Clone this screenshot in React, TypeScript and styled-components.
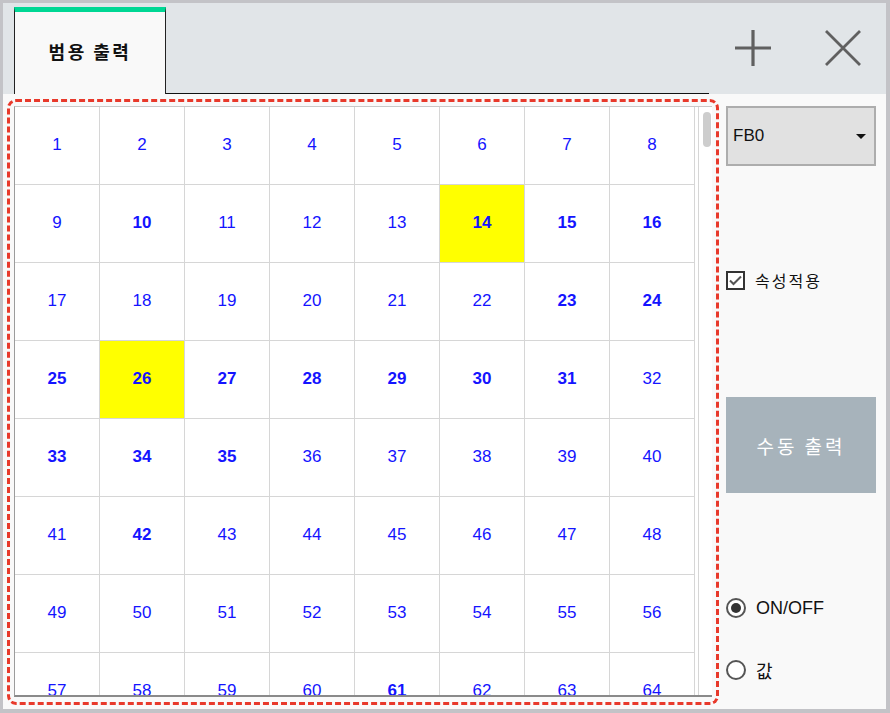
import React from 'react';
import styled, { createGlobalStyle } from 'styled-components';

const GlobalStyle = createGlobalStyle`
  html, body {
    margin: 0;
    padding: 0;
    background: #ffffff;
  }
  body {
    font-family: "Liberation Sans", "Noto Sans CJK KR", sans-serif;
  }
  * {
    box-sizing: border-box;
  }
`;

const KR = `"Noto Sans CJK KR", "Liberation Sans", sans-serif`;

//<editor-fold desc="Styles">
const Frame = styled.div`
  width: 890px;
  height: 713px;
  display: flex;
  flex-direction: column;
  border: 3px solid #c3c3c7;
  border-right-width: 4px;
  border-bottom-width: 4px;
  background: #f9f9f9;
`;

const Header = styled.div`
  height: 91px;
  flex: none;
  display: flex;
  align-items: flex-end;
  padding-left: 11px;
  background: #e1e5e8;
`;

const Tab = styled.div`
  width: 152px;
  height: 87px;
  display: flex;
  align-items: center;
  justify-content: center;
  padding-bottom: 5px;
  background: #f9f9f9;
  border-top: 5px solid #00d794;
  border-left: 1px solid #222;
  border-right: 1px solid #222;
  font-family: ${KR};
  font-weight: 700;
  font-size: 18px;
  letter-spacing: 2.5px;
  color: #111;
`;

const TabRule = styled.div`
  width: 543px;
  align-self: stretch;
  border-bottom: 1px solid #111;
`;

const Actions = styled.div`
  flex: 1;
  align-self: stretch;
  display: flex;
  align-items: center;
  gap: 54px;
  padding-left: 26px;
  padding-bottom: 2px;
`;

const IconButton = styled.button`
  width: 36px;
  height: 36px;
  padding: 0;
  border: none;
  background: transparent;
  display: flex;
  align-items: center;
  justify-content: center;
  cursor: pointer;
`;

const Body = styled.div`
  flex: 1;
  display: flex;
  min-height: 0;
`;

const FocusRing = styled.div`
  width: 712px;
  height: 606px;
  margin: 5px 0 0 4px;
  padding: 4px 4px 5px 4px;
  border: 3px dashed #e8392b;
  border-radius: 9px;
  display: flex;
`;

const ListBox = styled.div`
  flex: 1;
  display: flex;
  min-width: 0;
  background: #ffffff;
  border-left: 1px solid #9c9c9c;
  border-top: 1px solid #c8c8c8;
  border-bottom: 2px solid #8a8a8a;
`;

const Viewport = styled.div`
  flex: 1;
  overflow: hidden;
`;

const Rail = styled.div`
  width: 14px;
  flex: none;
  padding: 5px 1px 0 4px;
  border-left: 1px solid #d6d6d6;
  background: #ffffff;
`;

const Thumb = styled.div`
  height: 35px;
  border-radius: 5px;
  background: #cdcdcd;
`;

const Grid = styled.div`
  display: grid;
  grid-template-columns: repeat(8, 85px);
`;

const Cell = styled.div<{ $on?: boolean; $bold?: boolean }>`
  height: 78px;
  display: flex;
  align-items: center;
  justify-content: center;
  border-right: 1px solid #d6d6d6;
  border-bottom: 1px solid #d6d6d6;
  background: ${p => (p.$on ? '#ffff00' : '#ffffff')};
  color: #1414ff;
  font-size: 17px;
  font-weight: ${p => (p.$bold ? 700 : 400)};
  padding-bottom: 1px;
`;

const Side = styled.div`
  flex: 1;
  display: flex;
  flex-direction: column;
  padding: 0 10px 0 7px;
`;

const Select = styled.div`
  margin-top: 12px;
  height: 60px;
  display: flex;
  align-items: center;
  justify-content: space-between;
  padding: 0 8px 0 5px;
  background: #e1e1e1;
  border: 2px solid #adadad;
  font-size: 17px;
  color: #111;
`;

const Caret = styled.span`
  width: 0;
  height: 0;
  border-left: 5px solid transparent;
  border-right: 5px solid transparent;
  border-top: 5px solid #111;
`;

const CheckRow = styled.label`
  margin-top: 104px;
  height: 20px;
  display: flex;
  align-items: center;
  gap: 10px;
  font-family: ${KR};
  font-size: 16px;
  letter-spacing: 2px;
  color: #111;
`;

const Box = styled.span`
  width: 19px;
  height: 19px;
  flex: none;
  border: 2px solid #333;
  background: #fff;
  display: flex;
  align-items: center;
  justify-content: center;
`;

const ManualButton = styled.button`
  margin-top: 107px;
  height: 96px;
  border: none;
  background: #a7b3bb;
  color: #ffffff;
  font-family: ${KR};
  font-size: 19px;
  letter-spacing: 3px;
  cursor: pointer;
`;

const RadioRow = styled.label<{ $gap: number }>`
  margin-top: ${p => p.$gap}px;
  height: 20px;
  display: flex;
  align-items: center;
  gap: 10px;
  font-family: "Liberation Sans", ${KR};
  font-size: 18px;
  color: #111;
`;

const Dot = styled.span<{ $checked?: boolean }>`
  width: 20px;
  height: 20px;
  flex: none;
  border-radius: 50%;
  border: 2px solid #555;
  background: #fff;
  display: flex;
  align-items: center;
  justify-content: center;

  &::after {
    content: '';
    width: 10px;
    height: 10px;
    border-radius: 50%;
    background: ${p => (p.$checked ? '#333' : 'transparent')};
  }
`;
//</editor-fold>

const BOLD = new Set([10, 14, 15, 16, 23, 24, 25, 26, 27, 28, 29, 30, 31, 33, 34, 35, 42, 61]);
const LIT = new Set([14, 26]);
const CELLS = Array.from({ length: 64 }, (_, i) => i + 1);

const PlusIcon = () => (
  <svg width="36" height="36" viewBox="0 0 36 36">
    <path d="M18 0v36M0 18h36" stroke="#606060" strokeWidth="3.2" fill="none" />
  </svg>
);

const CloseIcon = () => (
  <svg width="36" height="36" viewBox="0 0 36 36">
    <path d="M1 1l34 34M35 1L1 35" stroke="#606060" strokeWidth="2.8" fill="none" />
  </svg>
);

const CheckMark = () => (
  <svg width="13" height="11" viewBox="0 0 13 11">
    <path d="M1 5.5l3.5 3.5L12 1.5" stroke="#555" strokeWidth="2" fill="none" />
  </svg>
);

export default function App() {
  return (
    <>
      <GlobalStyle />
      <Frame>
        <Header>
          <Tab>범용 출력</Tab>
          <TabRule />
          <Actions>
            <IconButton aria-label="추가">
              <PlusIcon />
            </IconButton>
            <IconButton aria-label="닫기">
              <CloseIcon />
            </IconButton>
          </Actions>
        </Header>
        <Body>
          <FocusRing>
            <ListBox>
              <Viewport>
                <Grid>
                  {CELLS.map(n => (
                    <Cell key={n} $on={LIT.has(n)} $bold={BOLD.has(n)}>
                      {n}
                    </Cell>
                  ))}
                </Grid>
              </Viewport>
              <Rail>
                <Thumb />
              </Rail>
            </ListBox>
          </FocusRing>
          <Side>
            <Select>
              <span>FB0</span>
              <Caret />
            </Select>
            <CheckRow>
              <Box>
                <CheckMark />
              </Box>
              속성적용
            </CheckRow>
            <ManualButton>수동 출력</ManualButton>
            <RadioRow $gap={105}>
              <Dot $checked />
              ON/OFF
            </RadioRow>
            <RadioRow $gap={42}>
              <Dot />
              값
            </RadioRow>
          </Side>
        </Body>
      </Frame>
    </>
  );
}
